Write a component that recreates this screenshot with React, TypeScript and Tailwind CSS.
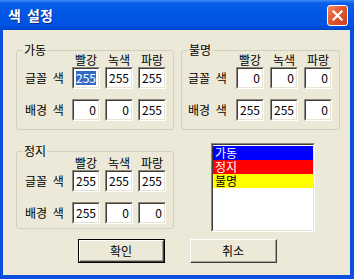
import React from 'react'

const FONT = "font-['Noto_Sans_CJK_KR','Noto_Sans',sans-serif]"

type Cell = { value: string; selected?: boolean }

function Sunken({ className, children }: { className?: string; children?: React.ReactNode }) {
  return (
    <div className={`border-t border-l border-[#8c8a7f] border-b border-r border-b-white border-r-white ${className ?? ''}`}>
      <div className="h-full w-full border-t border-l border-[#3f3d36] border-b border-r border-b-[#e6e3d3] border-r-[#e6e3d3] bg-white">
        {children}
      </div>
    </div>
  )
}

function NumBox({ cell }: { cell: Cell }) {
  return (
    <Sunken className="h-[22px] w-[28px]">
      <div className="flex h-full items-center justify-end pr-[2px] text-[12px] leading-[14px] text-black">
        {cell.selected ? <span className="bg-[#316ac5] text-white">{cell.value}</span> : <span>{cell.value}</span>}
      </div>
    </Sunken>
  )
}

function ColorGroup({
  title,
  fg,
  bg,
  width,
  height,
  padLeft,
  padTop,
  gap,
}: {
  title: string
  fg: Cell[]
  bg: Cell[]
  width: string
  height: string
  padLeft: string
  padTop: string
  gap: string
}) {
  return (
    <div className={`relative shrink-0 rounded-[3px] border border-[#d0d0bf] ${width} ${height} ${padLeft} ${padTop}`}>
      <span className="absolute -top-[8px] left-[6px] bg-[#ece9d8] px-[1px] text-[12px] leading-[14px] text-black">
        {title}
      </span>
      <div className={`grid grid-cols-[42px_28px_28px_28px] ${gap} text-[12px] leading-[14px] text-black`}>
        <div />
        <div className="h-[14px] whitespace-nowrap text-center">빨강</div>
        <div className="h-[14px] whitespace-nowrap text-center">녹색</div>
        <div className="h-[14px] whitespace-nowrap text-center">파랑</div>
      </div>
      <div className={`grid grid-cols-[42px_28px_28px_28px] ${gap} items-center text-[12px] leading-[14px] text-black`}>
        <div className="whitespace-nowrap [word-spacing:3px]">글꼴 색</div>
        {fg.map((c, i) => (
          <NumBox key={i} cell={c} />
        ))}
      </div>
      <div className={`mt-[10px] grid grid-cols-[42px_28px_28px_28px] ${gap} items-center text-[12px] leading-[14px] text-black`}>
        <div className="whitespace-nowrap [word-spacing:3px]">배경 색</div>
        {bg.map((c, i) => (
          <NumBox key={i} cell={c} />
        ))}
      </div>
    </div>
  )
}

function XpButton({ label, isDefault }: { label: string; isDefault?: boolean }) {
  return (
    <div className={`h-[24px] w-[87px] ${isDefault ? 'border border-black' : ''}`}>
      <div className="h-full w-full border-t border-l border-white border-b border-r border-b-[#404040] border-r-[#404040]">
        <div className="flex h-full w-full items-center justify-center border-b border-r border-b-[#a5a294] border-r-[#a5a294] bg-[#ece9d8] text-[12px] leading-[14px] text-black">
          {label}
        </div>
      </div>
    </div>
  )
}

export default function App() {
  return (
    <div className={`flex h-[279px] w-[354px] flex-col bg-[#0a4fdf] ${FONT}`}>
      {/* title bar */}
      <div className="flex h-[30px] shrink-0 items-center justify-between bg-[linear-gradient(to_bottom,#3c8ef8_0%,#0b5fe9_10%,#0057e6_45%,#0052e2_85%,#0043c8_100%)] pl-[8px] pr-[6px]">
        <span className="text-[14px] font-bold leading-[16px] text-white [word-spacing:3px] [text-shadow:1px_1px_0_#0a2a8c]">색 설정</span>
        <div className="flex h-[21px] w-[21px] items-center justify-center rounded-[3px] border border-white bg-[linear-gradient(135deg,#f08a66_0%,#e2582f_45%,#c9401b_100%)]">
          <svg width="11" height="11" viewBox="0 0 11 11">
            <path d="M1.5 1.5 L9.5 9.5 M9.5 1.5 L1.5 9.5" stroke="white" strokeWidth="2.2" strokeLinecap="square" />
          </svg>
        </div>
      </div>

      {/* client area */}
      <div className="mb-[4px] ml-[3px] mr-[4px] flex-1 bg-[#ece9d8] px-[13px] pt-[20px]">
        <div className="flex gap-[7px]">
          <ColorGroup
            title="가동"
            width="w-[158px]"
            height="h-[80px]"
            padLeft="pl-[8px]"
            padTop="pt-[2px]"
            gap="gap-x-[5px]"
            fg={[{ value: '255', selected: true }, { value: '255' }, { value: '255' }]}
            bg={[{ value: '0' }, { value: '0' }, { value: '255' }]}
          />
          <ColorGroup
            title="불명"
            width="w-[159px]"
            height="h-[80px]"
            padLeft="pl-[6px]"
            padTop="pt-[2px]"
            gap="gap-x-[6px]"
            fg={[{ value: '0' }, { value: '0' }, { value: '0' }]}
            bg={[{ value: '255' }, { value: '255' }, { value: '0' }]}
          />
        </div>

        <div className="mt-[13px] flex items-start">
          <div className="mt-[8px]">
            <ColorGroup
              title="정지"
              width="w-[158px]"
              height="h-[78px]"
              padLeft="pl-[8px]"
              padTop="pt-[4px]"
              gap="gap-x-[5px]"
              fg={[{ value: '255' }, { value: '255' }, { value: '255' }]}
              bg={[{ value: '255' }, { value: '0' }, { value: '0' }]}
            />
          </div>
          <Sunken className="ml-[37px] h-[89px] w-[104px]">
            <div className="flex flex-col pt-[1px] text-[12px] leading-[14px]">
              <div className="h-[14px] bg-[#0000ff] pl-[2px] text-white">가동</div>
              <div className="h-[14px] bg-[#ff0000] pl-[2px] text-white">정지</div>
              <div className="h-[14px] bg-[#ffff00] pl-[2px] text-black">불명</div>
            </div>
          </Sunken>
        </div>

        <div className="mt-[7px] flex gap-[25px] pl-[62px]">
          <XpButton label="확인" isDefault />
          <XpButton label="취소" />
        </div>
      </div>
    </div>
  )
}
